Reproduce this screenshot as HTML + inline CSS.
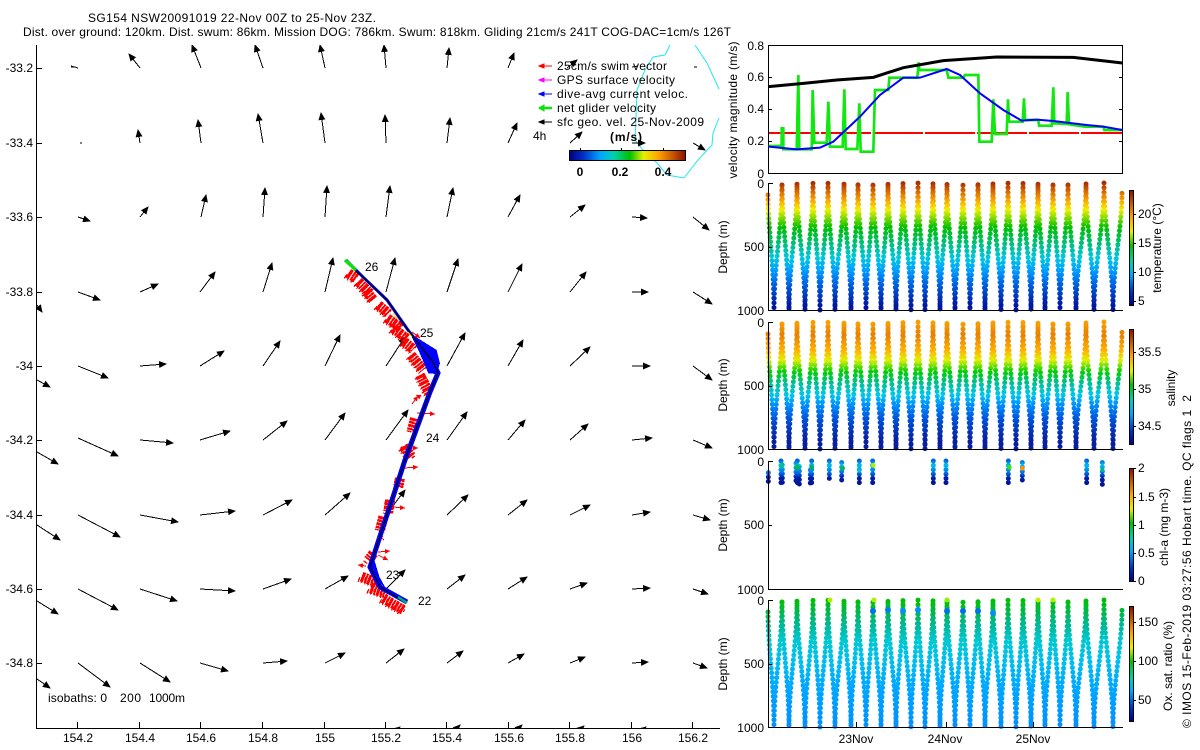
<!DOCTYPE html>
<html><head><meta charset="utf-8"><title>SG154</title>
<style>
html,body{margin:0;padding:0;background:#fff;width:1200px;height:750px;overflow:hidden}
svg{display:block}
text{font-family:"Liberation Sans",sans-serif;font-size:12px;fill:#000}
.e{text-anchor:end}.m{text-anchor:middle}.b{font-weight:bold}
.ax{stroke:#000;stroke-width:1;fill:none;shape-rendering:crispEdges}
.ar path{stroke:#000;stroke-width:1;fill:none;marker-end:url(#h);shape-rendering:crispEdges}
.sc{fill:none;stroke-width:5;stroke-linecap:round;stroke-dasharray:0 4.7}
</style></head><body>
<svg width="1200" height="750" viewBox="0 0 1200 750" xmlns="http://www.w3.org/2000/svg">
<defs>
<marker id="h" markerUnits="userSpaceOnUse" markerWidth="9" markerHeight="8" refX="7" refY="4" orient="auto" viewBox="0 0 9 8"><path d="M0 .5L8 4L0 7.5z" fill="#000"/></marker>
<marker id="r" markerUnits="userSpaceOnUse" markerWidth="6" markerHeight="5" refX="5" refY="2.5" orient="auto" viewBox="0 0 6 5"><path d="M0 0L5 2.5L0 5z" fill="#f00"/></marker>
<clipPath id="mc"><rect x="37" y="45" width="683" height="683"/></clipPath>
<linearGradient id="jet" x1="0" x2="1" y1="0" y2="0"><stop offset="0" stop-color="#000080"/><stop offset=".12" stop-color="#0030c8"/><stop offset=".27" stop-color="#00a8ff"/><stop offset=".38" stop-color="#00d0b0"/><stop offset=".52" stop-color="#00c000"/><stop offset=".64" stop-color="#e8f000"/><stop offset=".77" stop-color="#ffa000"/><stop offset="1" stop-color="#901000"/></linearGradient>
<linearGradient id="jetv" x1="0" x2="0" y1="1" y2="0"><stop offset="0" stop-color="#000080"/><stop offset=".12" stop-color="#0030c8"/><stop offset=".27" stop-color="#00a8ff"/><stop offset=".38" stop-color="#00d0b0"/><stop offset=".52" stop-color="#00c000"/><stop offset=".64" stop-color="#e8f000"/><stop offset=".77" stop-color="#ffa000"/><stop offset="1" stop-color="#901000"/></linearGradient>
<linearGradient id="gt" gradientUnits="userSpaceOnUse" x1="0" x2="0" y1="0" y2="127"><stop offset="0" stop-color="#a83000"/><stop offset=".055" stop-color="#d06000"/><stop offset=".13" stop-color="#f8a000"/><stop offset=".21" stop-color="#f0f000"/><stop offset=".35" stop-color="#00c000"/><stop offset=".5" stop-color="#00c090"/><stop offset=".59" stop-color="#00c8e0"/><stop offset=".685" stop-color="#00a0ff"/><stop offset=".8" stop-color="#0060e0"/><stop offset=".96" stop-color="#0018a0"/></linearGradient>
<linearGradient id="gs" gradientUnits="userSpaceOnUse" x1="0" x2="0" y1="0" y2="127"><stop offset="0" stop-color="#f8a000"/><stop offset=".1" stop-color="#e88000"/><stop offset=".22" stop-color="#ffb000"/><stop offset=".3" stop-color="#e0f000"/><stop offset=".39" stop-color="#00d000"/><stop offset=".48" stop-color="#00c090"/><stop offset=".575" stop-color="#00c8f0"/><stop offset=".65" stop-color="#0090ff"/><stop offset=".77" stop-color="#0050d8"/><stop offset=".93" stop-color="#0820a0"/></linearGradient>
<linearGradient id="go" gradientUnits="userSpaceOnUse" x1="0" x2="0" y1="0" y2="127"><stop offset="0" stop-color="#00c000"/><stop offset=".09" stop-color="#00b848"/><stop offset=".2" stop-color="#00b898"/><stop offset=".32" stop-color="#00c8d0"/><stop offset=".48" stop-color="#00c0f0"/><stop offset=".68" stop-color="#00a8ff"/><stop offset="1" stop-color="#0090ff"/></linearGradient>
<linearGradient id="gc" gradientUnits="userSpaceOnUse" x1="0" x2="0" y1="30" y2="115"><stop offset="0" stop-color="#0060e0"/><stop offset=".18" stop-color="#00c0e8"/><stop offset=".45" stop-color="#0070e8"/><stop offset=".62" stop-color="#0020a8"/><stop offset="1" stop-color="#001090"/></linearGradient>
<path id="zs" d="M768 12C768 45 774 82 774 127C774 82 782 45 782 0C782 45 789 82 789 127C789 82 797 45 797 0C797 45 805 82 805 127C805 82 813 45 813 0C813 45 820 82 820 127C820 82 828 45 828 0C828 45 835 82 835 127C835 82 844 45 844 0C844 45 851 82 851 127C851 82 858 45 858 0C858 45 866 82 866 127C866 82 873 45 873 0C873 45 881 82 881 127C881 82 888 45 888 0C888 45 896 82 896 127C896 82 903 45 903 0C903 45 911 82 911 127C911 82 918 45 918 0C918 45 925 82 925 127C925 82 933 45 933 0C933 45 940 82 940 127C940 82 947 45 947 0C947 45 955 82 955 127C955 82 963 45 963 0C963 45 970 82 970 127C970 82 978 45 978 0C978 45 985 82 985 127C985 82 993 45 993 0C993 45 1001 82 1001 127C1001 82 1008 45 1008 0C1008 45 1016 82 1016 127C1016 82 1023 45 1023 0C1023 45 1031 82 1031 127C1031 82 1038 45 1038 0C1038 45 1045 82 1045 127C1045 82 1053 45 1053 0C1053 45 1060 82 1060 127C1060 82 1068 45 1068 0C1068 45 1076 82 1076 127C1076 82 1086 45 1086 0C1086 45 1094 82 1094 127C1094 82 1104 45 1104 0C1104 45 1113 82 1113 127C1113 82 1122 45 1122 10"/>
<path id="ru" fill="none" stroke="#f00" d="M55 70L78 85M85 95L120 130M110 125L130 150M145 165L175 190M172 205L212 232M190 235L230 265M222 275L250 298M243 315L280 360M270 375L298 430"/>
<path id="rl" fill="none" stroke="#f00" d="M225 85L215 125M190 170L215 200M180 265L175 290M150 330L145 365M130 380L120 420M100 490L85 510M65 560L110 578M92 595L135 610M130 625L190 660"/>
</defs>

<text x="88" y="22" textLength="288">SG154 NSW20091019 22-Nov 00Z to 25-Nov 23Z.</text>
<text x="23" y="36" textLength="708">Dist. over ground: 120km. Dist. swum: 86km. Mission DOG: 786km. Swum: 818km. Gliding 21cm/s 241T COG-DAC=1cm/s 126T</text>

<!-- MAP -->
<g clip-path="url(#mc)">
<path d="M670 45L665 55L653 57L645 70L637 90L636 117L635 140L643 150L657 163L667 175L684 178L698 160L712 145L713 133L719 118M695 45L707 63L719 89" fill="none" stroke="#20e8f0" stroke-width="1"/>
<g class="ar">
<path d="M78 68L71 66" style="marker-end:none"/><path d="M71 67h3" stroke-width="2" style="marker-end:none"/>
<path d="M140 68L129 54"/><path d="M201 68L192 45"/><path d="M263 68L255 45"/><path d="M325 68L320 45"/><path d="M386 68L384 45"/><path d="M447 68L449 48"/><path d="M508 68L514 53"/><path d="M567 68L577 60"/><path d="M632 67L638 66" style="marker-end:none"/><path d="M694 67h3" stroke-width="2" style="marker-end:none"/>
<path d="M80 143h2" stroke-width="2" style="marker-end:none"/><path d="M140 143L138 130"/><path d="M201 143L198 120"/><path d="M263 143L258 114"/><path d="M325 143L321 113"/><path d="M386 143L385 115"/><path d="M447 143L450 118"/><path d="M508 143L517 123"/><path d="M570 143L582 132"/><path d="M632 143L645 143"/><path d="M693 143L705 150"/>
<path d="M78 217L90 221"/><path d="M140 217L148 207"/><path d="M201 217L206 195"/><path d="M263 217L265 188"/><path d="M325 217L327 186"/><path d="M386 217L390 186"/><path d="M447 217L453 188"/><path d="M508 217L520 195"/><path d="M570 217L585 205"/><path d="M632 217L647 218"/><path d="M693 217L709 230"/>
<path d="M37 305L42 312"/>
<path d="M78 292L100 300"/><path d="M140 292L158 284"/><path d="M200 292L215 272"/><path d="M263 292L272 263"/><path d="M325 292L333 258"/><path d="M386 292L395 258"/><path d="M447 292L458 259"/><path d="M508 292L522 264"/><path d="M570 292L586 272"/><path d="M632 292L648 292"/><path d="M693 292L712 304"/>
<path d="M37 380L50 387"/>
<path d="M78 366L108 378"/><path d="M140 366L166 364"/><path d="M200 366L224 351"/><path d="M263 366L280 341"/><path d="M325 366L340 335"/><path d="M386 366L405 337"/><path d="M447 366L465 333"/><path d="M508 366L523 340"/><path d="M570 366L590 347"/><path d="M632 366L650 366"/><path d="M693 366L712 380"/>
<path d="M37 452L58 464"/>
<path d="M78 438L118 456"/><path d="M140 440L173 443"/><path d="M200 440L230 431"/><path d="M263 440L287 421"/><path d="M325 440L345 413"/><path d="M386 440L408 410"/><path d="M447 440L467 412"/><path d="M508 440L525 420"/><path d="M570 440L588 424"/><path d="M632 440L652 438"/><path d="M693 440L712 448"/>
<path d="M37 525L60 540"/>
<path d="M78 515L120 537"/><path d="M140 515L178 522"/><path d="M200 515L235 511"/><path d="M263 515L292 500"/><path d="M325 515L350 493"/><path d="M386 515L405 490"/><path d="M447 515L468 495"/><path d="M508 515L527 500"/><path d="M570 515L590 505"/><path d="M632 515L650 512"/><path d="M693 515L710 520"/>
<path d="M37 601L58 614"/>
<path d="M78 589L118 610"/><path d="M140 589L177 601"/><path d="M200 589L235 591"/><path d="M263 589L291 579"/><path d="M325 589L348 576"/><path d="M386 589L405 570"/><path d="M447 589L465 575"/><path d="M508 589L527 577"/><path d="M570 589L587 583"/><path d="M632 589L650 588"/><path d="M693 589L708 594"/>
<path d="M37 679L50 688"/>
<path d="M78 663L110 687"/><path d="M140 663L170 682"/><path d="M200 663L228 671"/><path d="M263 663L287 661"/><path d="M325 663L345 653"/><path d="M386 663L404 649"/><path d="M447 663L463 651"/><path d="M508 663L524 654"/><path d="M570 663L585 657"/><path d="M632 663L648 662"/><path d="M693 663L707 668"/>
<path d="M386 738L400 727"/><path d="M447 738L460 725"/><path d="M508 738L522 725"/><path d="M570 738L584 726"/><path d="M632 738L646 727"/>
</g>
</g>

<!-- track red -->
<g transform="translate(330 250) scale(.33333)" shape-rendering="crispEdges">
<use href="#ru" stroke-width="30" stroke-dasharray="10 3 6 2"/>
<use href="#ru" transform="translate(-10 8)" stroke-width="14" stroke-dasharray="4 7 3 9"/>
<use href="#ru" transform="translate(8 -5)" stroke-width="9" stroke-dasharray="3 8 5 6"/>
<path d="M240 250L320 300L330 340L320 372L295 370L265 300z" fill="#00f"/>
</g>
<g transform="translate(340 390) scale(.33333)" shape-rendering="crispEdges">
<use href="#rl" stroke-width="30" stroke-dasharray="9 3 6 2"/>
<use href="#rl" transform="translate(-10 8)" stroke-width="14" stroke-dasharray="4 6 3 8"/>
<use href="#rl" transform="translate(9 6)" stroke-width="10" stroke-dasharray="3 7 5 5"/>
<path d="M100 500L118 560L140 600L90 545z" fill="#00f"/>
</g>
<g stroke="#f00" stroke-width="1" fill="none" shape-rendering="crispEdges">
<path d="M417 413L435 414" marker-end="url(#r)"/><path d="M400 448L418 448" marker-end="url(#r)"/><path d="M404 468L418 467" marker-end="url(#r)"/><path d="M393 507L405 508" marker-end="url(#r)"/><path d="M378 552L390 551" marker-end="url(#r)"/><path d="M378 555L388 560" marker-end="url(#r)"/><path d="M366 566L358 565" marker-end="url(#r)"/><path d="M420 397L416 395" marker-end="url(#r)"/><path d="M412 332L420 338" marker-end="url(#r)"/><path d="M408 448L401 447" marker-end="url(#r)"/><path d="M412 404L418 396" marker-end="url(#r)"/><path d="M384 540L378 535" marker-end="url(#r)"/>
</g>
<path d="M346 260L363 277L387 300L408 330L433 362" fill="none" stroke="#00f" stroke-width="3"/>
<path d="M433 362L438 373L430 392L415 433L405 460L393 497L382 530L370 567L380 587L407 602" fill="none" stroke="#00f" stroke-width="5"/>
<path d="M352 268L363 277L387 300L408 330L433 362L438 373L430 392L415 433L405 460L393 497L382 530L370 567L380 587L400 599" fill="none" stroke="#000" stroke-width="1.2"/>
<path d="M345 260L356 270" stroke="#10e010" stroke-width="3.5" fill="none"/>
<path d="M398 597L407 603" stroke="#00b060" stroke-width="2.5" fill="none"/>
<path d="M393 313L398 320M408 332L412 337" stroke="#f0e000" stroke-width="1" fill="none"/>

<text x="365" y="271">26</text><text x="420" y="337">25</text><text x="426" y="442">24</text><text x="386" y="579">23</text><text x="418" y="605">22</text>

<!-- map axes -->
<path class="ax" d="M36.5 45V728.5H720M36 68.5h6M36 143.5h6M36 217.5h6M36 292.5h6M36 366.5h6M36 440.5h6M36 515.5h6M36 589.5h6M36 663.5h6M77.5 728v-6M139.5 728v-6M200.5 728v-6M262.5 728v-6M324.5 728v-6M385.5 728v-6M446.5 728v-6M508.5 728v-6M569.5 728v-6M631.5 728v-6M692.5 728v-6"/>
<g class="e"><text x="33" y="72">-33.2</text><text x="33" y="147">-33.4</text><text x="33" y="221">-33.6</text><text x="33" y="296">-33.8</text><text x="33" y="370">-34</text><text x="33" y="444">-34.2</text><text x="33" y="519">-34.4</text><text x="33" y="593">-34.6</text><text x="33" y="667">-34.8</text></g>
<g class="m"><text x="78" y="742">154.2</text><text x="140" y="742">154.4</text><text x="201" y="742">154.6</text><text x="263" y="742">154.8</text><text x="325" y="742">155</text><text x="386" y="742">155.2</text><text x="447" y="742">155.4</text><text x="509" y="742">155.6</text><text x="570" y="742">155.8</text><text x="632" y="742">156</text><text x="693" y="742">156.2</text></g>
<text x="48" y="702" textLength="59">isobaths: 0</text><text x="120" y="702" textLength="21">200</text><text x="149" y="702" textLength="36">1000m</text>

<!-- legend -->
<g fill="none" stroke-width="1">
<path d="M539 66h13" stroke="#f00"/><path d="M539 66l5-2v4z" fill="#f00" stroke="#f00"/>
<path d="M539 80h13" stroke="#f0f"/><path d="M539 80l5-2v4z" fill="#f0f" stroke="#f0f"/>
<path d="M539 94h13" stroke="#00f"/><path d="M539 94l5-2v4z" fill="#00f" stroke="#00f"/>
<path d="M539 108h13" stroke="#10e010" stroke-width="2.5"/><path d="M539 108l5-3v6z" fill="#10e010" stroke="#10e010"/>
<path d="M539 122h13" stroke="#000"/><path d="M539 122l5-2v4z" fill="#000" stroke="#000"/>
</g>
<text x="557" y="70" textLength="110">25cm/s swim vector</text>
<text x="557" y="84" textLength="118">GPS surface velocity</text>
<text x="557" y="98" textLength="131">dive-avg current veloc.</text>
<text x="557" y="112" textLength="99">net glider velocity</text>
<text x="557" y="126" textLength="147">sfc geo. vel. 25-Nov-2009</text>
<text x="533" y="140">4h</text>
<text x="610" y="141" class="b" textLength="32">(m/s)</text>
<rect x="569.5" y="150.5" width="116" height="10" fill="url(#jet)" stroke="#000"/>
<path class="ax" d="M580.5 148v2M621.5 148v2M663.5 148v2"/>
<g class="m b"><text x="580" y="176">0</text><text x="620" y="176">0.2</text><text x="663" y="176">0.4</text></g>

<!-- velocity panel -->
<rect x="768.5" y="45.5" width="354" height="128" fill="none" stroke="#000" shape-rendering="crispEdges"/>
<path class="ax" d="M768 77.5h4M768 109.5h4M768 141.5h4M1123 77.5h-4M1123 109.5h-4M1123 141.5h-4"/>
<path d="M769 133H1122" stroke="#f00" stroke-width="2" stroke-dasharray="50 2"/>
<g transform="translate(720 30) scale(.33333)" fill="none">
<path d="M146 348H185V295H190V358H230L235 135L238 358H275L278 180L283 338H320L325 215L330 350H368L373 178L377 357H412L418 220L422 365H460L465 180H505L508 143H592L596 97L598 120H680L685 143H730L735 135H775L778 335H815L820 208L825 312H860L864 208L867 275H908L912 205L915 270H955L957 287H995L1000 172L1003 280L1040 282L1043 186L1047 283L1095 290H1150L1153 300H1207" stroke="#10e810" stroke-width="8"/>
<path d="M146 170L250 160L350 150L460 142L550 113L670 92L830 81L1060 82L1207 99" stroke="#000" stroke-width="9"/>
<path d="M146 350L230 358L300 353L340 335L420 260L480 195L550 143L600 143L680 117L720 135L780 190L850 240L905 272L950 269L1000 273L1100 285L1150 290L1207 300" stroke="#00f" stroke-width="6"/>
</g>
<g class="e"><text x="764" y="50">0.8</text><text x="764" y="81">0.6</text><text x="764" y="113">0.4</text><text x="764" y="145">0.2</text><text x="764" y="178">0</text></g>
<text transform="translate(737 110) rotate(-90)" class="m" textLength="137">velocity magnitude (m/s)</text>

<!-- temperature -->
<use href="#zs" transform="translate(0 183)" class="sc" stroke="url(#gt)"/>
<path class="ax" d="M768.5 183V310.5H1123M768 183.5h5M768 247.5h4"/>
<g class="e"><text x="764" y="188">0</text><text x="764" y="251">500</text><text x="764" y="315">1000</text></g>
<text transform="translate(727 247) rotate(-90)" class="m">Depth (m)</text>
<rect x="1129.5" y="190.5" width="4" height="115" fill="url(#jetv)" stroke="#000"/>
<path class="ax" d="M1133 214.5h3M1133 243.5h3M1133 272.5h3M1133 301.5h3"/>
<text x="1138" y="218">20</text><text x="1138" y="247">15</text><text x="1138" y="276">10</text><text x="1138" y="305">5</text>
<text transform="translate(1161 248) rotate(-90)" class="m">temperature (°C)</text>

<!-- salinity -->
<use href="#zs" transform="translate(0 322)" class="sc" stroke="url(#gs)"/>
<path class="ax" d="M768.5 322V449.5H1123M768 322.5h5M768 386.5h4"/>
<g class="e"><text x="764" y="327">0</text><text x="764" y="390">500</text><text x="764" y="454">1000</text></g>
<text transform="translate(727 385) rotate(-90)" class="m">Depth (m)</text>
<rect x="1129.5" y="329.5" width="4" height="115" fill="url(#jetv)" stroke="#000"/>
<path class="ax" d="M1133 352.5h3M1133 389.5h3M1133 426.5h3"/>
<text x="1138" y="356">35.5</text><text x="1138" y="393">35</text><text x="1138" y="430">34.5</text>
<text transform="translate(1175 388) rotate(-90)" class="m">salinity</text>

<!-- chl -->
<g transform="translate(720 450) scale(.33333)">
<path d="M145 68V103M183 33V108M187 45V100M232 33V105M228 40V100M238 50V110M275 33V100M271 60V102M328 33V98M365 38V102M418 33V102M458 33V100M640 33V102M678 33V110M865 33V103M907 38V102M1100 33V100M1147 38V105" fill="none" stroke="url(#gc)" stroke-width="15" stroke-linecap="round" stroke-dasharray="0 13"/>
<g stroke="none"><circle cx="185" cy="46" r="7" fill="#00c090"/><circle cx="232" cy="52" r="7" fill="#00c030"/><circle cx="275" cy="52" r="7" fill="#00b060"/><circle cx="368" cy="55" r="7" fill="#00b860"/><circle cx="460" cy="46" r="7" fill="#b0f000"/><circle cx="868" cy="52" r="7" fill="#40e000"/><circle cx="907" cy="55" r="7" fill="#ff9000"/><circle cx="418" cy="62" r="6" fill="#00c8c0"/><circle cx="1147" cy="60" r="6" fill="#00b890"/></g>
</g>
<path class="ax" d="M768.5 461V589.5H1123M768 461.5h5M768 525.5h4"/>
<g class="e"><text x="764" y="466">0</text><text x="764" y="529">500</text><text x="764" y="594">1000</text></g>
<text transform="translate(727 525) rotate(-90)" class="m">Depth (m)</text>
<rect x="1129.5" y="468.5" width="4" height="113" fill="url(#jetv)" stroke="#000"/>
<path class="ax" d="M1133 468.5h3M1133 497.5h3M1133 525.5h3M1133 553.5h3M1133 581.5h3"/>
<text x="1138" y="472">2</text><text x="1138" y="501">1.5</text><text x="1138" y="529">1</text><text x="1138" y="557">0.5</text><text x="1138" y="585">0</text>
<text transform="translate(1168 527) rotate(-90)" class="m">chl-a (mg m-3)</text>

<!-- oxygen -->
<use href="#zs" transform="translate(0 600)" class="sc" stroke="url(#go)"/>
<g stroke="none"><circle cx="830" cy="600" r="2.5" fill="#b0f000"/><circle cx="874" cy="600" r="2.5" fill="#b0f000"/><circle cx="947" cy="600" r="2.5" fill="#90f000"/><circle cx="1038" cy="600" r="2.5" fill="#c0f000"/><circle cx="1053" cy="600" r="2.5" fill="#b0f000"/><circle cx="873" cy="611" r="3" fill="#0070e8"/><circle cx="888" cy="610" r="3" fill="#0080f0"/><circle cx="903" cy="611" r="3" fill="#0090f0"/><circle cx="918" cy="610" r="3" fill="#0090f8"/><circle cx="947" cy="611" r="3" fill="#0070e8"/><circle cx="963" cy="611" r="3" fill="#0070e8"/><circle cx="978" cy="611" r="3" fill="#0070e8"/><circle cx="993" cy="613" r="3" fill="#0090f0"/></g>
<path class="ax" d="M768.5 600V727.5H1123M768 600.5h5M768 664.5h4M856.5 727v-5M946.5 727v-5M1033.5 727v-5"/>
<g class="e"><text x="764" y="605">0</text><text x="764" y="668">500</text><text x="764" y="732">1000</text></g>
<text transform="translate(727 664) rotate(-90)" class="m">Depth (m)</text>
<rect x="1129.5" y="606.5" width="4" height="115" fill="url(#jetv)" stroke="#000"/>
<path class="ax" d="M1133 622.5h3M1133 661.5h3M1133 700.5h3"/>
<text x="1138" y="626">150</text><text x="1138" y="665">100</text><text x="1138" y="704">50</text>
<text transform="translate(1172 666) rotate(-90)" class="m">Ox. sat. ratio (%)</text>
<g class="m"><text x="856" y="743">23Nov</text><text x="945" y="743">24Nov</text><text x="1033" y="743">25Nov</text></g>

<text transform="translate(1191 728) rotate(-90)" textLength="333" xml:space="preserve">© IMOS 15-Feb-2019 03:27:56 Hobart time. QC flags 1  2</text>
</svg>
</body></html>
